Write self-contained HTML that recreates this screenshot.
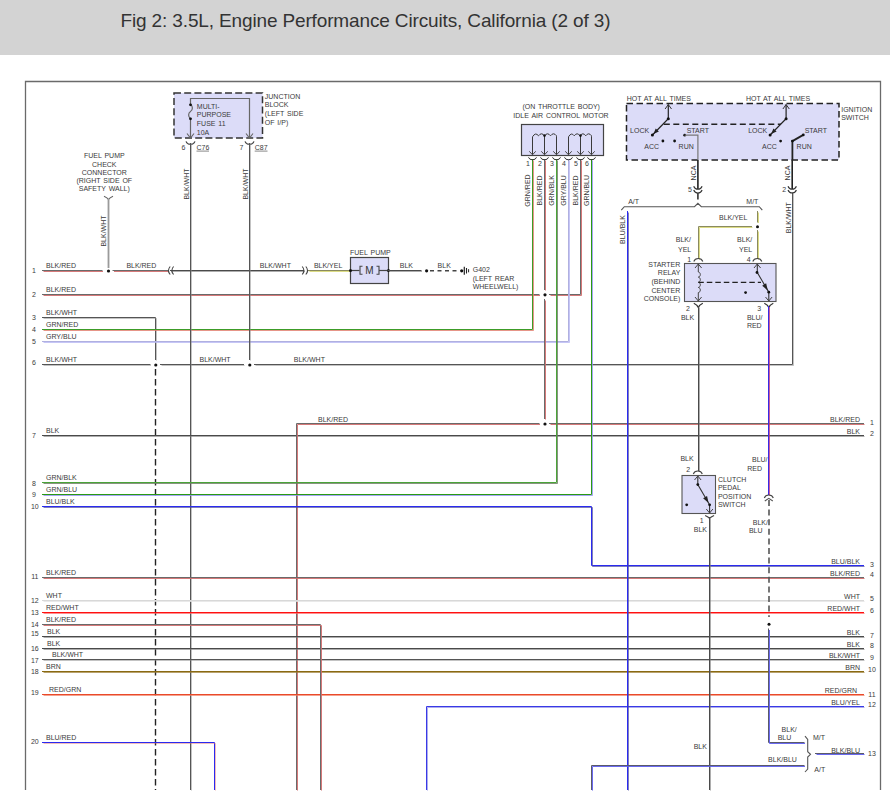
<!DOCTYPE html>
<html><head><meta charset="utf-8">
<style>
html,body{margin:0;padding:0;background:#fff;width:890px;height:806px;overflow:hidden}
#hdr{position:absolute;left:0;top:0;width:890px;height:55px;background:#d3d3d3}
#title{position:absolute;left:120.5px;top:10px;font-family:"Liberation Sans",sans-serif;font-size:19px;letter-spacing:-0.14px;color:#333;white-space:nowrap}
svg{position:absolute;left:0;top:0}
svg text{font-family:"Liberation Sans",sans-serif;word-spacing:0.9px}
</style></head><body>
<div id="hdr"><span id="title">Fig 2: 3.5L, Engine Performance Circuits, California (2 of 3)</span></div>
<svg width="890" height="806" viewBox="0 0 890 806">
<path d="M25.5,790 V81.5 H880.5 V790" stroke="#6a6a6a" stroke-width="1.3" fill="none"/>
<rect x="174" y="93" width="88.5" height="45" fill="#dcdcf8" stroke="#333" stroke-width="1.5" stroke-dasharray="7,3.2"/>
<path d="M190.5,104 V98.5 H249.5 V138" stroke="#666" stroke-width="1.2" fill="none"/>
<path d="M190.5,104.5 c2.5,1.5 2.5,5.5 0,7 c-2.5,1.5 -2.5,5.5 0,7" stroke="#666" stroke-width="1.2" fill="none"/>
<path d="M190.5,118.5 V138" stroke="#666" stroke-width="1.2" fill="none"/>
<circle cx="190.5" cy="104.8" r="1.4" fill="#111"/>
<circle cx="190.5" cy="118.8" r="1.4" fill="#111"/>
<path d="M187.0,133.5 L190.5,138 L194.0,133.5" stroke="#666" stroke-width="1.1" fill="none"/>
<path d="M186.0,141.3 Q187.0,144.3 190.5,144.3 Q194.0,144.3 195.0,141.3" stroke="#444" stroke-width="1.1" fill="none"/>
<path d="M246.0,133.5 L249.5,138 L253.0,133.5" stroke="#666" stroke-width="1.1" fill="none"/>
<path d="M245.0,141.3 Q246.0,144.3 249.5,144.3 Q253.0,144.3 254.0,141.3" stroke="#444" stroke-width="1.1" fill="none"/>
<text x="196.8" y="108.8" font-size="7" fill="#3a3a3a" text-anchor="start" >MULTI-</text>
<text x="196.8" y="117" font-size="7" fill="#3a3a3a" text-anchor="start" >PURPOSE</text>
<text x="196.8" y="126" font-size="7" fill="#3a3a3a" text-anchor="start" >FUSE 11</text>
<text x="196.8" y="135" font-size="7" fill="#3a3a3a" text-anchor="start" >10A</text>
<text x="264.8" y="99" font-size="7" fill="#3a3a3a" text-anchor="start" >JUNCTION</text>
<text x="264.8" y="106.8" font-size="7" fill="#3a3a3a" text-anchor="start" >BLOCK</text>
<text x="264.8" y="115.8" font-size="7" fill="#3a3a3a" text-anchor="start" >(LEFT SIDE</text>
<text x="264.8" y="125" font-size="7" fill="#3a3a3a" text-anchor="start" >OF I/P)</text>
<text x="183.5" y="149.7" font-size="7" fill="#3a3a3a" text-anchor="middle" >6</text>
<text x="241.5" y="149.7" font-size="7" fill="#3a3a3a" text-anchor="middle" >7</text>
<text x="196.5" y="149.7" font-size="7" fill="#3a3a3a" text-anchor="start" >C76</text>
<text x="254.7" y="149.7" font-size="7" fill="#3a3a3a" text-anchor="start" >C87</text>
<line x1="196.5" y1="151.1" x2="209" y2="151.1" stroke="#555" stroke-width="0.7"/>
<line x1="254.7" y1="151.1" x2="267.5" y2="151.1" stroke="#555" stroke-width="0.7"/>
<text x="0" y="0" font-size="7" fill="#3a3a3a" text-anchor="middle" transform="translate(189.2,184) rotate(-90)">BLK/WHT</text>
<text x="0" y="0" font-size="7" fill="#3a3a3a" text-anchor="middle" transform="translate(248.2,184) rotate(-90)">BLK/WHT</text>
<text x="104.3" y="158" font-size="7" fill="#3a3a3a" text-anchor="middle" >FUEL PUMP</text>
<text x="104.3" y="166.7" font-size="7" fill="#3a3a3a" text-anchor="middle" >CHECK</text>
<text x="104.3" y="175" font-size="7" fill="#3a3a3a" text-anchor="middle" >CONNECTOR</text>
<text x="104.3" y="183.3" font-size="7" fill="#3a3a3a" text-anchor="middle" >(RIGHT SIDE OF</text>
<text x="104.3" y="190.5" font-size="7" fill="#3a3a3a" text-anchor="middle" >SAFETY WALL)</text>
<path d="M104.0,196.3 Q107.5,197.9 108.5,199.5 Q109.5,197.9 113.0,196.3" stroke="#666" stroke-width="1.1" fill="none"/>
<line x1="108.5" y1="199" x2="108.5" y2="268" stroke="#9a9a9a" stroke-width="1.8" />
<text x="0" y="0" font-size="7" fill="#3a3a3a" text-anchor="middle" transform="translate(105.6,231) rotate(-90)">BLK/WHT</text>
<text x="34" y="273.0" font-size="7" fill="#3a3a3a" text-anchor="middle" >1</text>
<text x="46" y="268" font-size="7" fill="#3a3a3a" text-anchor="start" >BLK/RED</text>
<text x="34" y="297.0" font-size="7" fill="#3a3a3a" text-anchor="middle" >2</text>
<text x="46" y="292" font-size="7" fill="#3a3a3a" text-anchor="start" >BLK/RED</text>
<text x="34" y="320.0" font-size="7" fill="#3a3a3a" text-anchor="middle" >3</text>
<text x="46" y="315" font-size="7" fill="#3a3a3a" text-anchor="start" >BLK/WHT</text>
<text x="34" y="332.0" font-size="7" fill="#3a3a3a" text-anchor="middle" >4</text>
<text x="46" y="327" font-size="7" fill="#3a3a3a" text-anchor="start" >GRN/RED</text>
<text x="34" y="343.5" font-size="7" fill="#3a3a3a" text-anchor="middle" >5</text>
<text x="46" y="339" font-size="7" fill="#3a3a3a" text-anchor="start" >GRY/BLU</text>
<text x="34" y="365.0" font-size="7" fill="#3a3a3a" text-anchor="middle" >6</text>
<text x="46" y="362" font-size="7" fill="#3a3a3a" text-anchor="start" >BLK/WHT</text>
<text x="34" y="437.5" font-size="7" fill="#3a3a3a" text-anchor="middle" >7</text>
<text x="46" y="433" font-size="7" fill="#3a3a3a" text-anchor="start" >BLK</text>
<text x="34" y="485.5" font-size="7" fill="#3a3a3a" text-anchor="middle" >8</text>
<text x="46" y="480" font-size="7" fill="#3a3a3a" text-anchor="start" >GRN/BLK</text>
<text x="34" y="496.5" font-size="7" fill="#3a3a3a" text-anchor="middle" >9</text>
<text x="46" y="492" font-size="7" fill="#3a3a3a" text-anchor="start" >GRN/BLU</text>
<text x="34.8" y="509.0" font-size="7" fill="#3a3a3a" text-anchor="middle" >10</text>
<text x="46" y="504" font-size="7" fill="#3a3a3a" text-anchor="start" >BLU/BLK</text>
<text x="34.8" y="579.0" font-size="7" fill="#3a3a3a" text-anchor="middle" >11</text>
<text x="46" y="575" font-size="7" fill="#3a3a3a" text-anchor="start" >BLK/RED</text>
<text x="34.8" y="602.5" font-size="7" fill="#3a3a3a" text-anchor="middle" >12</text>
<text x="46" y="598" font-size="7" fill="#3a3a3a" text-anchor="start" >WHT</text>
<text x="34.8" y="615.0" font-size="7" fill="#3a3a3a" text-anchor="middle" >13</text>
<text x="46" y="610" font-size="7" fill="#3a3a3a" text-anchor="start" >RED/WHT</text>
<text x="34.8" y="627.0" font-size="7" fill="#3a3a3a" text-anchor="middle" >14</text>
<text x="46" y="622" font-size="7" fill="#3a3a3a" text-anchor="start" >BLK/RED</text>
<text x="34.8" y="636.0" font-size="7" fill="#3a3a3a" text-anchor="middle" >15</text>
<text x="47" y="634" font-size="7" fill="#3a3a3a" text-anchor="start" >BLK</text>
<text x="34.8" y="651.0" font-size="7" fill="#3a3a3a" text-anchor="middle" >16</text>
<text x="47" y="646" font-size="7" fill="#3a3a3a" text-anchor="start" >BLK</text>
<text x="34.8" y="662.5" font-size="7" fill="#3a3a3a" text-anchor="middle" >17</text>
<text x="52" y="657" font-size="7" fill="#3a3a3a" text-anchor="start" >BLK/WHT</text>
<text x="34.8" y="674.0" font-size="7" fill="#3a3a3a" text-anchor="middle" >18</text>
<text x="46" y="669" font-size="7" fill="#3a3a3a" text-anchor="start" >BRN</text>
<text x="34.8" y="695.0" font-size="7" fill="#3a3a3a" text-anchor="middle" >19</text>
<text x="49" y="692" font-size="7" fill="#3a3a3a" text-anchor="start" >RED/GRN</text>
<text x="34.8" y="743.8" font-size="7" fill="#3a3a3a" text-anchor="middle" >20</text>
<text x="46" y="740" font-size="7" fill="#3a3a3a" text-anchor="start" >BLU/RED</text>
<path d="M42.5,270.5 L102.0,270.5" stroke="#6a6a6a" stroke-width="1.0" fill="none" stroke-linecap="square"/>
<path d="M43.5,271.5 L103.0,271.5" stroke="#d06a6a" stroke-opacity="0.9" stroke-width="1" fill="none"/>
<path d="M113.0,270.5 L167.5,270.5" stroke="#6a6a6a" stroke-width="1.0" fill="none" stroke-linecap="square"/>
<path d="M114.0,271.5 L168.5,271.5" stroke="#d06a6a" stroke-opacity="0.9" stroke-width="1" fill="none"/>
<circle cx="108.5" cy="271" r="1.6" fill="#111"/>
<path d="M170.5,270.5 L303.5,270.5" stroke="#4a4a4a" stroke-width="1.0" fill="none" stroke-linecap="square"/>
<path d="M171.5,271.5 L304.5,271.5" stroke="#777777" stroke-opacity="0.6" stroke-width="1" fill="none"/>
<path d="M308.5,270.5 L349.5,270.5" stroke="#8a8a60" stroke-width="1.0" fill="none" stroke-linecap="square"/>
<path d="M309.5,271.5 L350.5,271.5" stroke="#d8d878" stroke-opacity="0.9" stroke-width="1" fill="none"/>
<text x="126.4" y="268" font-size="7" fill="#3a3a3a" text-anchor="start" >BLK/RED</text>
<text x="259.8" y="268" font-size="7" fill="#3a3a3a" text-anchor="start" >BLK/WHT</text>
<text x="313.9" y="267.7" font-size="7" fill="#3a3a3a" text-anchor="start" >BLK/YEL</text>
<path d="M170.2,266.5 Q166.7,270.5 170.2,274.5" stroke="#444" stroke-width="1.1" fill="none"/>
<path d="M173.6,266.5 Q170.1,270.5 173.6,274.5" stroke="#444" stroke-width="1.1" fill="none"/>
<path d="M302.2,266.5 Q305.7,270.5 302.2,274.5" stroke="#444" stroke-width="1.1" fill="none"/>
<path d="M305.8,266.5 Q309.3,270.5 305.8,274.5" stroke="#444" stroke-width="1.1" fill="none"/>
<rect x="350.5" y="257.5" width="38" height="26" fill="#dcdcf8" stroke="#444" stroke-width="1.2"/>
<line x1="350.5" y1="270.5" x2="359.5" y2="270.5" stroke="#444" stroke-width="1.2" />
<line x1="379" y1="270.5" x2="388.5" y2="270.5" stroke="#444" stroke-width="1.2" />
<path d="M362.5,266.3 H360 V274.3 H362.5" stroke="#444" stroke-width="1.1" fill="none"/>
<path d="M376.5,266.3 H379 V274.3 H376.5" stroke="#444" stroke-width="1.1" fill="none"/>
<text x="369.5" y="274" font-size="10" fill="#333" text-anchor="middle" >M</text>
<circle cx="350.5" cy="270.5" r="1.5" fill="#111"/>
<circle cx="388.5" cy="270.5" r="1.5" fill="#111"/>
<text x="350" y="254.7" font-size="7" fill="#3a3a3a" text-anchor="start" >FUEL PUMP</text>
<path d="M388.0,270.5 L421.0,270.5" stroke="#4a4a4a" stroke-width="1.0" fill="none" stroke-linecap="square"/>
<path d="M389.0,271.5 L422.0,271.5" stroke="#777777" stroke-opacity="0.6" stroke-width="1" fill="none"/>
<circle cx="426.6" cy="270.8" r="1.6" fill="#111"/>
<path d="M430,270.8 H460" stroke="#444" stroke-width="1.4" stroke-dasharray="4,3.5"/>
<circle cx="461.7" cy="270.8" r="1.6" fill="#111"/>
<line x1="464.3" y1="266.8" x2="464.3" y2="274.8" stroke="#222" stroke-width="1.2" />
<line x1="466.5" y1="268" x2="466.5" y2="273.5" stroke="#222" stroke-width="1.1" />
<line x1="468.6" y1="269.2" x2="468.6" y2="272.3" stroke="#222" stroke-width="1" />
<text x="399.8" y="267.7" font-size="7" fill="#3a3a3a" text-anchor="start" >BLK</text>
<text x="437.6" y="267.7" font-size="7" fill="#3a3a3a" text-anchor="start" >BLK</text>
<text x="472.7" y="272" font-size="7" fill="#3a3a3a" text-anchor="start" >G402</text>
<text x="472.7" y="281.2" font-size="7" fill="#3a3a3a" text-anchor="start" >(LEFT REAR</text>
<text x="472.7" y="288.5" font-size="7" fill="#3a3a3a" text-anchor="start" >WHEELWELL)</text>
<path d="M42.5,294.5 L539.0,294.5" stroke="#6a6a6a" stroke-width="1.0" fill="none" stroke-linecap="square"/>
<path d="M43.5,295.5 L540.0,295.5" stroke="#d06a6a" stroke-opacity="0.9" stroke-width="1" fill="none"/>
<path d="M549.5,294.5 L580.5,294.5 L580.5,159.5" stroke="#6a6a6a" stroke-width="1.0" fill="none" stroke-linecap="square"/>
<path d="M550.5,295.5 L581.5,295.5 L581.5,160.5" stroke="#d06a6a" stroke-opacity="0.9" stroke-width="1" fill="none"/>
<path d="M42.5,317.5 L155.5,317.5 L155.5,359.5" stroke="#555555" stroke-width="1.0" fill="none" stroke-linecap="square"/>
<path d="M43.5,318.5 L156.5,318.5 L156.5,360.5" stroke="#888888" stroke-opacity="0.5" stroke-width="1" fill="none"/>
<path d="M42.5,329.5 L532.5,329.5 L532.5,159.5" stroke="#3c9c28" stroke-width="1.0" fill="none" stroke-linecap="square"/>
<path d="M43.5,330.5 L533.5,330.5 L533.5,160.5" stroke="#e07a6a" stroke-opacity="0.8" stroke-width="1" fill="none"/>
<path d="M42.5,341.5 L568.5,341.5 L568.5,159.5" stroke="#b0b0e0" stroke-width="1.0" fill="none" stroke-linecap="square"/>
<path d="M43.5,342.5 L569.5,342.5 L569.5,160.5" stroke="#b8b8f4" stroke-opacity="0.8" stroke-width="1" fill="none"/>
<path d="M42.5,364.5 L150.0,364.5" stroke="#555555" stroke-width="1.0" fill="none" stroke-linecap="square"/>
<path d="M43.5,365.5 L151.0,365.5" stroke="#888888" stroke-opacity="0.5" stroke-width="1" fill="none"/>
<path d="M160.5,364.5 L243.5,364.5" stroke="#555555" stroke-width="1.0" fill="none" stroke-linecap="square"/>
<path d="M161.5,365.5 L244.5,365.5" stroke="#888888" stroke-opacity="0.5" stroke-width="1" fill="none"/>
<path d="M254.5,364.5 L792.5,364.5 L792.5,193.0" stroke="#555555" stroke-width="1.0" fill="none" stroke-linecap="square"/>
<path d="M255.5,365.5 L793.5,365.5 L793.5,194.0" stroke="#888888" stroke-opacity="0.5" stroke-width="1" fill="none"/>
<circle cx="155.8" cy="365" r="1.6" fill="#111"/>
<circle cx="249.8" cy="365" r="1.6" fill="#111"/>
<text x="199.5" y="362" font-size="7" fill="#3a3a3a" text-anchor="start" >BLK/WHT</text>
<text x="293.8" y="362" font-size="7" fill="#3a3a3a" text-anchor="start" >BLK/WHT</text>
<path d="M155.5,369 V790" stroke="#222" stroke-width="1.4" stroke-dasharray="6.5,3.5"/>
<path d="M190.5,143.5 L190.5,789.5" stroke="#555555" stroke-width="1.0" fill="none" stroke-linecap="square"/>
<path d="M191.5,144.5 L191.5,790.5" stroke="#888888" stroke-opacity="0.5" stroke-width="1" fill="none"/>
<path d="M249.5,143.5 L249.5,359.5" stroke="#555555" stroke-width="1.0" fill="none" stroke-linecap="square"/>
<path d="M250.5,144.5 L250.5,360.5" stroke="#888888" stroke-opacity="0.5" stroke-width="1" fill="none"/>
<path d="M42.5,435.5 L863.5,435.5" stroke="#4a4a4a" stroke-width="1.0" fill="none" stroke-linecap="square"/>
<path d="M43.5,436.5 L864.5,436.5" stroke="#777777" stroke-opacity="0.6" stroke-width="1" fill="none"/>
<path d="M296.5,789.5 L296.5,423.5 L539.0,423.5" stroke="#6a6a6a" stroke-width="1.0" fill="none" stroke-linecap="square"/>
<path d="M297.5,790.5 L297.5,424.5 L540.0,424.5" stroke="#d06a6a" stroke-opacity="0.9" stroke-width="1" fill="none"/>
<path d="M549.5,423.5 L863.5,423.5" stroke="#6a6a6a" stroke-width="1.0" fill="none" stroke-linecap="square"/>
<path d="M550.5,424.5 L864.5,424.5" stroke="#d06a6a" stroke-opacity="0.9" stroke-width="1" fill="none"/>
<circle cx="545" cy="424" r="1.6" fill="#111"/>
<text x="318" y="421.5" font-size="7" fill="#3a3a3a" text-anchor="start" >BLK/RED</text>
<path d="M544.5,159.5 L544.5,289.5" stroke="#6a6a6a" stroke-width="1.0" fill="none" stroke-linecap="square"/>
<path d="M545.5,160.5 L545.5,290.5" stroke="#d06a6a" stroke-opacity="0.9" stroke-width="1" fill="none"/>
<path d="M544.5,299.5 L544.5,418.5" stroke="#6a6a6a" stroke-width="1.0" fill="none" stroke-linecap="square"/>
<path d="M545.5,300.5 L545.5,419.5" stroke="#d06a6a" stroke-opacity="0.9" stroke-width="1" fill="none"/>
<circle cx="545" cy="294.8" r="1.6" fill="#111"/>
<path d="M42.5,482.5 L556.5,482.5 L556.5,159.5" stroke="#4aa438" stroke-width="1.0" fill="none" stroke-linecap="square"/>
<path d="M43.5,483.5 L557.5,483.5 L557.5,160.5" stroke="#6a7a60" stroke-opacity="0.8" stroke-width="1" fill="none"/>
<path d="M42.5,494.5 L591.5,494.5 L591.5,159.5" stroke="#2a9a14" stroke-width="1.0" fill="none" stroke-linecap="square"/>
<path d="M43.5,495.5 L592.5,495.5 L592.5,160.5" stroke="#9090f0" stroke-opacity="0.8" stroke-width="1" fill="none"/>
<path d="M42.5,506.5 L591.5,506.5 L591.5,565.5 L863.5,565.5" stroke="#2a2af0" stroke-width="1.0" fill="none" stroke-linecap="square"/>
<path d="M43.5,507.5 L592.5,507.5 L592.5,566.5 L864.5,566.5" stroke="#4a4aa0" stroke-opacity="0.7" stroke-width="1" fill="none"/>
<path d="M42.5,577.5 L863.5,577.5" stroke="#6a6a6a" stroke-width="1.0" fill="none" stroke-linecap="square"/>
<path d="M43.5,578.5 L864.5,578.5" stroke="#d06a6a" stroke-opacity="0.9" stroke-width="1" fill="none"/>
<path d="M42.5,600.5 L863.5,600.5" stroke="#d8d8d8" stroke-width="1.0" fill="none" stroke-linecap="square"/>
<path d="M43.5,601.5 L864.5,601.5" stroke="#e4e4e4" stroke-opacity="0.8" stroke-width="1" fill="none"/>
<path d="M42.5,612.5 L863.5,612.5" stroke="#ff1010" stroke-width="1.0" fill="none" stroke-linecap="square"/>
<path d="M43.5,613.5 L864.5,613.5" stroke="#ff6060" stroke-opacity="0.7" stroke-width="1" fill="none"/>
<path d="M42.5,636.5 L863.5,636.5" stroke="#4a4a4a" stroke-width="1.0" fill="none" stroke-linecap="square"/>
<path d="M43.5,637.5 L864.5,637.5" stroke="#777777" stroke-opacity="0.6" stroke-width="1" fill="none"/>
<path d="M42.5,648.5 L863.5,648.5" stroke="#4a4a4a" stroke-width="1.0" fill="none" stroke-linecap="square"/>
<path d="M43.5,649.5 L864.5,649.5" stroke="#777777" stroke-opacity="0.6" stroke-width="1" fill="none"/>
<path d="M42.5,659.5 L863.5,659.5" stroke="#555555" stroke-width="1.0" fill="none" stroke-linecap="square"/>
<path d="M43.5,660.5 L864.5,660.5" stroke="#888888" stroke-opacity="0.5" stroke-width="1" fill="none"/>
<path d="M42.5,671.5 L863.5,671.5" stroke="#8a6a12" stroke-width="1.0" fill="none" stroke-linecap="square"/>
<path d="M43.5,672.5 L864.5,672.5" stroke="#9a7a30" stroke-opacity="0.7" stroke-width="1" fill="none"/>
<path d="M42.5,694.5 L863.5,694.5" stroke="#ea4a2a" stroke-width="1.0" fill="none" stroke-linecap="square"/>
<path d="M43.5,695.5 L864.5,695.5" stroke="#f07a60" stroke-opacity="0.7" stroke-width="1" fill="none"/>
<path d="M42.5,624.5 L320.5,624.5 L320.5,789.5" stroke="#6a6a6a" stroke-width="1.0" fill="none" stroke-linecap="square"/>
<path d="M43.5,625.5 L321.5,625.5 L321.5,790.5" stroke="#d06a6a" stroke-opacity="0.9" stroke-width="1" fill="none"/>
<path d="M42.5,742.5 L214.5,742.5 L214.5,789.5" stroke="#2a2af0" stroke-width="1.0" fill="none" stroke-linecap="square"/>
<path d="M43.5,743.5 L215.5,743.5 L215.5,790.5" stroke="#e06a6a" stroke-opacity="0.45" stroke-width="1" fill="none"/>
<path d="M426.5,789.5 L426.5,706.5 L863.5,706.5" stroke="#3a3ae6" stroke-width="1.0" fill="none" stroke-linecap="square"/>
<path d="M427.5,790.5 L427.5,707.5 L864.5,707.5" stroke="#8a8ae8" stroke-opacity="0.7" stroke-width="1" fill="none"/>
<text x="860" y="421.8" font-size="7" fill="#3a3a3a" text-anchor="end" >BLK/RED</text>
<text x="872" y="425.0" font-size="7" fill="#3a3a3a" text-anchor="middle" >1</text>
<text x="860" y="433.8" font-size="7" fill="#3a3a3a" text-anchor="end" >BLK</text>
<text x="872" y="436.2" font-size="7" fill="#3a3a3a" text-anchor="middle" >2</text>
<text x="860" y="563.8" font-size="7" fill="#3a3a3a" text-anchor="end" >BLU/BLK</text>
<text x="872" y="567.0" font-size="7" fill="#3a3a3a" text-anchor="middle" >3</text>
<text x="860" y="575.8" font-size="7" fill="#3a3a3a" text-anchor="end" >BLK/RED</text>
<text x="872" y="577.0" font-size="7" fill="#3a3a3a" text-anchor="middle" >4</text>
<text x="860" y="598.8" font-size="7" fill="#3a3a3a" text-anchor="end" >WHT</text>
<text x="872" y="600.5" font-size="7" fill="#3a3a3a" text-anchor="middle" >5</text>
<text x="860" y="610.8" font-size="7" fill="#3a3a3a" text-anchor="end" >RED/WHT</text>
<text x="872" y="612.5" font-size="7" fill="#3a3a3a" text-anchor="middle" >6</text>
<text x="860" y="634.8" font-size="7" fill="#3a3a3a" text-anchor="end" >BLK</text>
<text x="872" y="637.5" font-size="7" fill="#3a3a3a" text-anchor="middle" >7</text>
<text x="860" y="646.8" font-size="7" fill="#3a3a3a" text-anchor="end" >BLK</text>
<text x="872" y="648.0" font-size="7" fill="#3a3a3a" text-anchor="middle" >8</text>
<text x="860" y="657.8" font-size="7" fill="#3a3a3a" text-anchor="end" >BLK/WHT</text>
<text x="872" y="660.0" font-size="7" fill="#3a3a3a" text-anchor="middle" >9</text>
<text x="860" y="669.8" font-size="7" fill="#3a3a3a" text-anchor="end" >BRN</text>
<text x="872" y="671.5" font-size="7" fill="#3a3a3a" text-anchor="middle" >10</text>
<text x="857" y="692.8" font-size="7" fill="#3a3a3a" text-anchor="end" >RED/GRN</text>
<text x="872" y="696.8" font-size="7" fill="#3a3a3a" text-anchor="middle" >11</text>
<text x="860" y="704.8" font-size="7" fill="#3a3a3a" text-anchor="end" >BLU/YEL</text>
<text x="872" y="707.1" font-size="7" fill="#3a3a3a" text-anchor="middle" >12</text>
<text x="860" y="752.8" font-size="7" fill="#3a3a3a" text-anchor="end" >BLK/BLU</text>
<text x="872" y="756.2" font-size="7" fill="#3a3a3a" text-anchor="middle" >13</text>
<text x="561.2" y="108.6" font-size="7" fill="#3a3a3a" text-anchor="middle" >(ON THROTTLE BODY)</text>
<text x="561" y="118" font-size="7" fill="#3a3a3a" text-anchor="middle" >IDLE AIR CONTROL MOTOR</text>
<rect x="521.5" y="124.5" width="82" height="31" fill="#dcdcf8" stroke="#444" stroke-width="1.2"/>
<path d="M532.5,154.5 V136.8 Q535.5,131.8 538.5,135.8 Q541.5,131.8 544.5,135.8 Q547.5,131.8 550.5,135.8 Q553.5,131.8 556.5,135.8 L556.5,136.8 V154.5" stroke="#3a3a3a" stroke-width="1" fill="none"/>
<path d="M544.5,135.5 V154.5" stroke="#3a3a3a" stroke-width="1" fill="none"/>
<circle cx="544.5" cy="135.6" r="1.3" fill="#111"/>
<path d="M568.5,154.5 V136.8 Q571.375,131.8 574.25,135.8 Q577.125,131.8 580.0,135.8 Q582.875,131.8 585.75,135.8 Q588.625,131.8 591.5,135.8 L591.5,136.8 V154.5" stroke="#3a3a3a" stroke-width="1" fill="none"/>
<path d="M580.5,135.5 V154.5" stroke="#3a3a3a" stroke-width="1" fill="none"/>
<circle cx="580.5" cy="135.6" r="1.3" fill="#111"/>
<path d="M529.3,151.3 L532.5,154.8 L535.7,151.3" stroke="#444" stroke-width="1" fill="none"/>
<path d="M528.5,157.3 Q529.3,159.8 532.5,159.8 Q535.7,159.8 536.5,157.3" stroke="#333" stroke-width="1" fill="none"/>
<path d="M541.3,151.3 L544.5,154.8 L547.7,151.3" stroke="#444" stroke-width="1" fill="none"/>
<path d="M540.5,157.3 Q541.3,159.8 544.5,159.8 Q547.7,159.8 548.5,157.3" stroke="#333" stroke-width="1" fill="none"/>
<path d="M553.3,151.3 L556.5,154.8 L559.7,151.3" stroke="#444" stroke-width="1" fill="none"/>
<path d="M552.5,157.3 Q553.3,159.8 556.5,159.8 Q559.7,159.8 560.5,157.3" stroke="#333" stroke-width="1" fill="none"/>
<path d="M565.3,151.3 L568.5,154.8 L571.7,151.3" stroke="#444" stroke-width="1" fill="none"/>
<path d="M564.5,157.3 Q565.3,159.8 568.5,159.8 Q571.7,159.8 572.5,157.3" stroke="#333" stroke-width="1" fill="none"/>
<path d="M577.3,151.3 L580.5,154.8 L583.7,151.3" stroke="#444" stroke-width="1" fill="none"/>
<path d="M576.5,157.3 Q577.3,159.8 580.5,159.8 Q583.7,159.8 584.5,157.3" stroke="#333" stroke-width="1" fill="none"/>
<path d="M588.3,151.3 L591.5,154.8 L594.7,151.3" stroke="#444" stroke-width="1" fill="none"/>
<path d="M587.5,157.3 Q588.3,159.8 591.5,159.8 Q594.7,159.8 595.5,157.3" stroke="#333" stroke-width="1" fill="none"/>
<text x="528.0" y="166" font-size="7" fill="#3a3a3a" text-anchor="middle" >1</text>
<text x="540.0" y="166" font-size="7" fill="#3a3a3a" text-anchor="middle" >2</text>
<text x="552.0" y="166" font-size="7" fill="#3a3a3a" text-anchor="middle" >3</text>
<text x="564.0" y="166" font-size="7" fill="#3a3a3a" text-anchor="middle" >4</text>
<text x="576.0" y="166" font-size="7" fill="#3a3a3a" text-anchor="middle" >5</text>
<text x="587.0" y="166" font-size="7" fill="#3a3a3a" text-anchor="middle" >6</text>
<text x="0" y="0" font-size="7" fill="#3a3a3a" text-anchor="middle" transform="translate(529.5,190.5) rotate(-90)">GRN/RED</text>
<text x="0" y="0" font-size="7" fill="#3a3a3a" text-anchor="middle" transform="translate(541.5,190.5) rotate(-90)">BLK/RED</text>
<text x="0" y="0" font-size="7" fill="#3a3a3a" text-anchor="middle" transform="translate(553.5,190.5) rotate(-90)">GRN/BLK</text>
<text x="0" y="0" font-size="7" fill="#3a3a3a" text-anchor="middle" transform="translate(565.5,190.5) rotate(-90)">GRY/BLU</text>
<text x="0" y="0" font-size="7" fill="#3a3a3a" text-anchor="middle" transform="translate(577.5,190.5) rotate(-90)">BLK/RED</text>
<text x="0" y="0" font-size="7" fill="#3a3a3a" text-anchor="middle" transform="translate(588.5,190.5) rotate(-90)">GRN/BLU</text>
<rect x="626.5" y="103.5" width="212.5" height="56.5" fill="#dcdcf8" stroke="#222" stroke-width="1.5" stroke-dasharray="6.5,3.5"/>
<text x="626.7" y="100.8" font-size="7" fill="#3a3a3a" text-anchor="start" >HOT AT ALL TIMES</text>
<text x="746" y="100.8" font-size="7" fill="#3a3a3a" text-anchor="start" >HOT AT ALL TIMES</text>
<text x="841.2" y="112" font-size="7" fill="#3a3a3a" text-anchor="start" >IGNITION</text>
<text x="841.2" y="120" font-size="7" fill="#3a3a3a" text-anchor="start" >SWITCH</text>
<path d="M663.8,124.2 H781" stroke="#222" stroke-width="1.4" stroke-dasharray="6,3.5"/>
<path d="M668.3,104.5 V118.7 L652.4,135" stroke="#222" stroke-width="1.2" fill="none"/>
<path d="M665.0999999999999,109 L668.3,104.5 L671.5,109" stroke="#333" stroke-width="1" fill="none"/>
<circle cx="668.3" cy="118.7" r="1.5" fill="#111"/>
<circle cx="652.4" cy="135" r="1.5" fill="#111"/>
<path d="M653.4499999999999,133.9 L658.9,131.5 L655.6999999999999,128.5 Z" fill="#222"/>
<path d="M786.1,104.5 V118.7 L770.1,135" stroke="#222" stroke-width="1.2" fill="none"/>
<path d="M782.9,109 L786.1,104.5 L789.3000000000001,109" stroke="#333" stroke-width="1" fill="none"/>
<circle cx="786.1" cy="118.7" r="1.5" fill="#111"/>
<circle cx="770.1" cy="135" r="1.5" fill="#111"/>
<path d="M771.15,133.9 L776.6,131.5 L773.4,128.5 Z" fill="#222"/>
<text x="630.1" y="132.5" font-size="7" fill="#3a3a3a" text-anchor="start" >LOCK</text>
<text x="686.7" y="132.5" font-size="7" fill="#3a3a3a" text-anchor="start" >START</text>
<text x="644.3" y="148.7" font-size="7" fill="#3a3a3a" text-anchor="start" >ACC</text>
<text x="678.6" y="149.3" font-size="7" fill="#3a3a3a" text-anchor="start" >RUN</text>
<text x="748.2" y="132.5" font-size="7" fill="#3a3a3a" text-anchor="start" >LOCK</text>
<text x="804.7" y="132.5" font-size="7" fill="#3a3a3a" text-anchor="start" >START</text>
<text x="762" y="148.7" font-size="7" fill="#3a3a3a" text-anchor="start" >ACC</text>
<text x="796.6" y="149.3" font-size="7" fill="#3a3a3a" text-anchor="start" >RUN</text>
<circle cx="662.9" cy="141" r="1.4" fill="#111"/>
<circle cx="674.6" cy="141" r="1.4" fill="#111"/>
<circle cx="684.7" cy="135.2" r="1.4" fill="#111"/>
<path d="M684.7,135.2 H697.9 V160" stroke="#777" stroke-width="1.2" fill="none"/>
<circle cx="780.6" cy="141.1" r="1.4" fill="#111"/>
<path d="M803.3,134.9 L792.4,141.1 V160" stroke="#222" stroke-width="1.8" fill="none"/>
<circle cx="803.3" cy="134.9" r="1.4" fill="#111"/>
<circle cx="792.4" cy="141.1" r="1.4" fill="#111"/>
<path d="M697.9,160 V189" stroke="#222" stroke-width="1.6" fill="none"/>
<path d="M693.6999999999999,186.3 Q694.9,189.3 697.9,189.3 Q700.9,189.3 702.1,186.3" stroke="#333" stroke-width="1.1" fill="none"/>
<path d="M693.6999999999999,190 Q694.9,193 697.9,193 Q700.9,193 702.1,190" stroke="#333" stroke-width="1.1" fill="none"/>
<text x="0" y="0" font-size="7" fill="#3a3a3a" text-anchor="middle" transform="translate(695.9,173) rotate(-90)">NCA</text>
<text x="689.9" y="192" font-size="7" fill="#3a3a3a" text-anchor="middle" >5</text>
<path d="M792.2,160 V189" stroke="#222" stroke-width="1.6" fill="none"/>
<path d="M788.0,186.3 Q789.2,189.3 792.2,189.3 Q795.2,189.3 796.4000000000001,186.3" stroke="#333" stroke-width="1.1" fill="none"/>
<path d="M788.0,190 Q789.2,193 792.2,193 Q795.2,193 796.4000000000001,190" stroke="#333" stroke-width="1.1" fill="none"/>
<text x="0" y="0" font-size="7" fill="#3a3a3a" text-anchor="middle" transform="translate(790.2,173) rotate(-90)">NCA</text>
<text x="784.2" y="192" font-size="7" fill="#3a3a3a" text-anchor="middle" >2</text>
<path d="M697.9,193 V199.6" stroke="#333" stroke-width="1.6" fill="none"/>
<path d="M621.3,210.2 L624.3,206.7 H694.5 L697.9,203.3 L701.3,206.7 H759.3 L762.3,210.2" stroke="#555" stroke-width="1.1" fill="none"/>
<text x="628.2" y="204" font-size="7" fill="#3a3a3a" text-anchor="start" >A/T</text>
<text x="746.3" y="204" font-size="7" fill="#3a3a3a" text-anchor="start" >M/T</text>
<path d="M627.5,211.5 L627.5,789.5" stroke="#2a2af0" stroke-width="1.0" fill="none" stroke-linecap="square"/>
<path d="M628.5,212.5 L628.5,790.5" stroke="#4a4aa0" stroke-opacity="0.7" stroke-width="1" fill="none"/>
<text x="0" y="0" font-size="7" fill="#3a3a3a" text-anchor="middle" transform="translate(625.0,229.5) rotate(-90)">BLU/BLK</text>
<text x="0" y="0" font-size="7" fill="#3a3a3a" text-anchor="middle" transform="translate(790.9,217.7) rotate(-90)">BLK/WHT</text>
<path d="M757.5,211.5 L757.5,222.0" stroke="#8a8a60" stroke-width="1.0" fill="none" stroke-linecap="square"/>
<path d="M758.5,212.5 L758.5,223.0" stroke="#d8d878" stroke-opacity="0.9" stroke-width="1" fill="none"/>
<path d="M757.5,230.5 L757.5,258.5" stroke="#8a8a60" stroke-width="1.0" fill="none" stroke-linecap="square"/>
<path d="M758.5,231.5 L758.5,259.5" stroke="#d8d878" stroke-opacity="0.9" stroke-width="1" fill="none"/>
<path d="M698.5,258.5 L698.5,226.5 L751.5,226.5" stroke="#8a8a60" stroke-width="1.0" fill="none" stroke-linecap="square"/>
<path d="M699.5,259.5 L699.5,227.5 L752.5,227.5" stroke="#d8d878" stroke-opacity="0.9" stroke-width="1" fill="none"/>
<circle cx="757.5" cy="226.8" r="1.5" fill="#111"/>
<text x="719" y="219.5" font-size="7" fill="#3a3a3a" text-anchor="start" >BLK/YEL</text>
<text x="675.8" y="242.3" font-size="7" fill="#3a3a3a" text-anchor="start" >BLK/</text>
<text x="678" y="252" font-size="7" fill="#3a3a3a" text-anchor="start" >YEL</text>
<text x="737.1" y="242.3" font-size="7" fill="#3a3a3a" text-anchor="start" >BLK/</text>
<text x="739" y="252" font-size="7" fill="#3a3a3a" text-anchor="start" >YEL</text>
<rect x="684.5" y="263.5" width="91.5" height="38" fill="#dcdcf8" stroke="#555" stroke-width="1.1"/>
<path d="M693.8,261.5 Q694.8,258.5 698.3,258.5 Q701.8,258.5 702.8,261.5" stroke="#444" stroke-width="1.1" fill="none"/>
<path d="M752.8,261.5 Q753.8,258.5 757.3,258.5 Q760.8,258.5 761.8,261.5" stroke="#444" stroke-width="1.1" fill="none"/>
<text x="689.3" y="261.5" font-size="7" fill="#3a3a3a" text-anchor="middle" >1</text>
<text x="748.6" y="261.5" font-size="7" fill="#3a3a3a" text-anchor="middle" >4</text>
<text x="680.3" y="266.5" font-size="7" fill="#3a3a3a" text-anchor="end" >STARTER</text>
<text x="680.3" y="275" font-size="7" fill="#3a3a3a" text-anchor="end" >RELAY</text>
<text x="680.3" y="283.5" font-size="7" fill="#3a3a3a" text-anchor="end" >(BEHIND</text>
<text x="680.3" y="292.5" font-size="7" fill="#3a3a3a" text-anchor="end" >CENTER</text>
<text x="680.3" y="300.6" font-size="7" fill="#3a3a3a" text-anchor="end" >CONSOLE)</text>
<path d="M698.3,264 V272 C701,272.3 701,276.8 698.3,277.15 C701,277.45 701,281.95 698.3,282.29999999999995 C701,282.6 701,287.1 698.3,287.45 C701,287.75 701,292.25 698.3,292.59999999999997  V301" stroke="#444" stroke-width="1" fill="none"/>
<path d="M695,268 L698.3,264 L701.6,268" stroke="#444" stroke-width="1" fill="none"/>
<path d="M695,297 L698.3,301 L701.6,297" stroke="#444" stroke-width="1" fill="none"/>
<path d="M698.3,282.4 H761" stroke="#222" stroke-width="1.2" stroke-dasharray="5.5,3"/>
<path d="M757.3,264 V272.5 L768.8,292.2 V301" stroke="#333" stroke-width="1.1" fill="none"/>
<path d="M754,268 L757.3,264 L760.6,268" stroke="#444" stroke-width="1" fill="none"/>
<path d="M765.5,297 L768.8,301 L772.1,297" stroke="#444" stroke-width="1" fill="none"/>
<path d="M767.8,290.5 L766.15,283.3 L762.2,285.7 Z" fill="#222"/>
<circle cx="757" cy="272.5" r="1.4" fill="#111"/>
<circle cx="768.8" cy="292.2" r="1.4" fill="#111"/>
<circle cx="745.6" cy="292.6" r="1.4" fill="#111"/>
<path d="M693.8,303.3 Q697.3,305 698.3,307.5 Q699.3,305 702.8,303.3" stroke="#333" stroke-width="1.2" fill="none"/>
<path d="M764.3,303.3 Q767.8,305 768.8,307.5 Q769.8,305 773.3,303.3" stroke="#333" stroke-width="1.2" fill="none"/>
<text x="687.9" y="311" font-size="7" fill="#3a3a3a" text-anchor="middle" >2</text>
<text x="759.1" y="311" font-size="7" fill="#3a3a3a" text-anchor="middle" >3</text>
<text x="680.9" y="320" font-size="7" fill="#3a3a3a" text-anchor="start" >BLK</text>
<text x="746.9" y="320" font-size="7" fill="#3a3a3a" text-anchor="start" >BLU/</text>
<text x="746.9" y="327.5" font-size="7" fill="#3a3a3a" text-anchor="start" >RED</text>
<path d="M698.5,306.5 L698.5,470.5" stroke="#4a4a4a" stroke-width="1.0" fill="none" stroke-linecap="square"/>
<path d="M699.5,307.5 L699.5,471.5" stroke="#777777" stroke-opacity="0.6" stroke-width="1" fill="none"/>
<path d="M768.5,306.5 L768.5,494.5" stroke="#3a2ae8" stroke-width="1.0" fill="none" stroke-linecap="square"/>
<path d="M769.5,307.5 L769.5,495.5" stroke="#c03a7a" stroke-opacity="0.8" stroke-width="1" fill="none"/>
<text x="680.4" y="460.7" font-size="7" fill="#3a3a3a" text-anchor="start" >BLK</text>
<text x="688.3" y="472" font-size="7" fill="#3a3a3a" text-anchor="middle" >2</text>
<path d="M693.3,474 Q694.3,471 697.8,471 Q701.3,471 702.3,474" stroke="#444" stroke-width="1.1" fill="none"/>
<rect x="682" y="475.5" width="33.5" height="38" fill="#dcdcf8" stroke="#555" stroke-width="1.1"/>
<path d="M697.8,476 V484.6 L709.6,504.8 V513" stroke="#333" stroke-width="1.1" fill="none"/>
<path d="M694.5,480 L697.8,476 L701.1,480" stroke="#444" stroke-width="1" fill="none"/>
<path d="M706.3,509 L709.6,513 L712.9,509" stroke="#444" stroke-width="1" fill="none"/>
<path d="M708.6,503.1 L707.05,495.9 L703.1,498.2 Z" fill="#222"/>
<circle cx="697.8" cy="484.6" r="1.4" fill="#111"/>
<circle cx="709.6" cy="504.8" r="1.4" fill="#111"/>
<circle cx="686.7" cy="504.8" r="1.4" fill="#111"/>
<path d="M705.1,515.5 Q708.6,517.0 709.6,518.5 Q710.6,517.0 714.1,515.5" stroke="#444" stroke-width="1.1" fill="none"/>
<text x="701.7" y="523" font-size="7" fill="#3a3a3a" text-anchor="middle" >1</text>
<text x="693.8" y="532.3" font-size="7" fill="#3a3a3a" text-anchor="start" >BLK</text>
<text x="717.9" y="481.5" font-size="7" fill="#3a3a3a" text-anchor="start" >CLUTCH</text>
<text x="717.9" y="490" font-size="7" fill="#3a3a3a" text-anchor="start" >PEDAL</text>
<text x="717.9" y="498.7" font-size="7" fill="#3a3a3a" text-anchor="start" >POSITION</text>
<text x="717.9" y="507.3" font-size="7" fill="#3a3a3a" text-anchor="start" >SWITCH</text>
<path d="M709.5,517.5 L709.5,789.5" stroke="#4a4a4a" stroke-width="1.0" fill="none" stroke-linecap="square"/>
<path d="M710.5,518.5 L710.5,790.5" stroke="#777777" stroke-opacity="0.6" stroke-width="1" fill="none"/>
<text x="752" y="461.5" font-size="7" fill="#3a3a3a" text-anchor="start" >BLU/</text>
<text x="747.3" y="470.5" font-size="7" fill="#3a3a3a" text-anchor="start" >RED</text>
<path d="M764.3,498 Q765.3,495 768.8,495 Q772.3,495 773.3,498" stroke="#444" stroke-width="1.1" fill="none"/>
<path d="M764.8,501 L768.8,498.3 L772.8,501" stroke="#555" stroke-width="1.1" fill="none"/>
<path d="M769,500 V617" stroke="#555" stroke-width="1.6" stroke-dasharray="6,3.6"/>
<text x="752.8" y="525.2" font-size="7" fill="#3a3a3a" text-anchor="start" >BLK/</text>
<text x="748.9" y="533.1" font-size="7" fill="#3a3a3a" text-anchor="start" >BLU</text>
<circle cx="769" cy="624.3" r="1.5" fill="#111"/>
<path d="M768.5,629.0 L768.5,742.5 L804.0,742.5" stroke="#5a5a6a" stroke-width="1.0" fill="none" stroke-linecap="square"/>
<path d="M769.5,630.0 L769.5,743.5 L805.0,743.5" stroke="#5a5aee" stroke-opacity="0.9" stroke-width="1" fill="none"/>
<path d="M591.5,789.5 L591.5,765.5 L804.0,765.5" stroke="#5a5a6a" stroke-width="1.0" fill="none" stroke-linecap="square"/>
<path d="M592.5,790.5 L592.5,766.5 L805.0,766.5" stroke="#5a5aee" stroke-opacity="0.9" stroke-width="1" fill="none"/>
<path d="M815.5,753.5 L863.5,753.5" stroke="#5a5a6a" stroke-width="1.0" fill="none" stroke-linecap="square"/>
<path d="M816.5,754.5 L864.5,754.5" stroke="#5a5aee" stroke-opacity="0.9" stroke-width="1" fill="none"/>
<path d="M805,736.2 L807.7,739.5 V751.7 L810.5,754.3 L807.7,757 V769 L805,772" stroke="#555" stroke-width="1.1" fill="none"/>
<text x="812.9" y="739.8" font-size="7" fill="#3a3a3a" text-anchor="start" >M/T</text>
<text x="814.3" y="771.7" font-size="7" fill="#3a3a3a" text-anchor="start" >A/T</text>
<text x="781.6" y="732" font-size="7" fill="#3a3a3a" text-anchor="start" >BLK/</text>
<text x="777.7" y="739.6" font-size="7" fill="#3a3a3a" text-anchor="start" >BLU</text>
<text x="768.1" y="762.4" font-size="7" fill="#3a3a3a" text-anchor="start" >BLK/BLU</text>
<text x="693.7" y="749" font-size="7" fill="#3a3a3a" text-anchor="start" >BLK</text>
</svg>
</body></html>
